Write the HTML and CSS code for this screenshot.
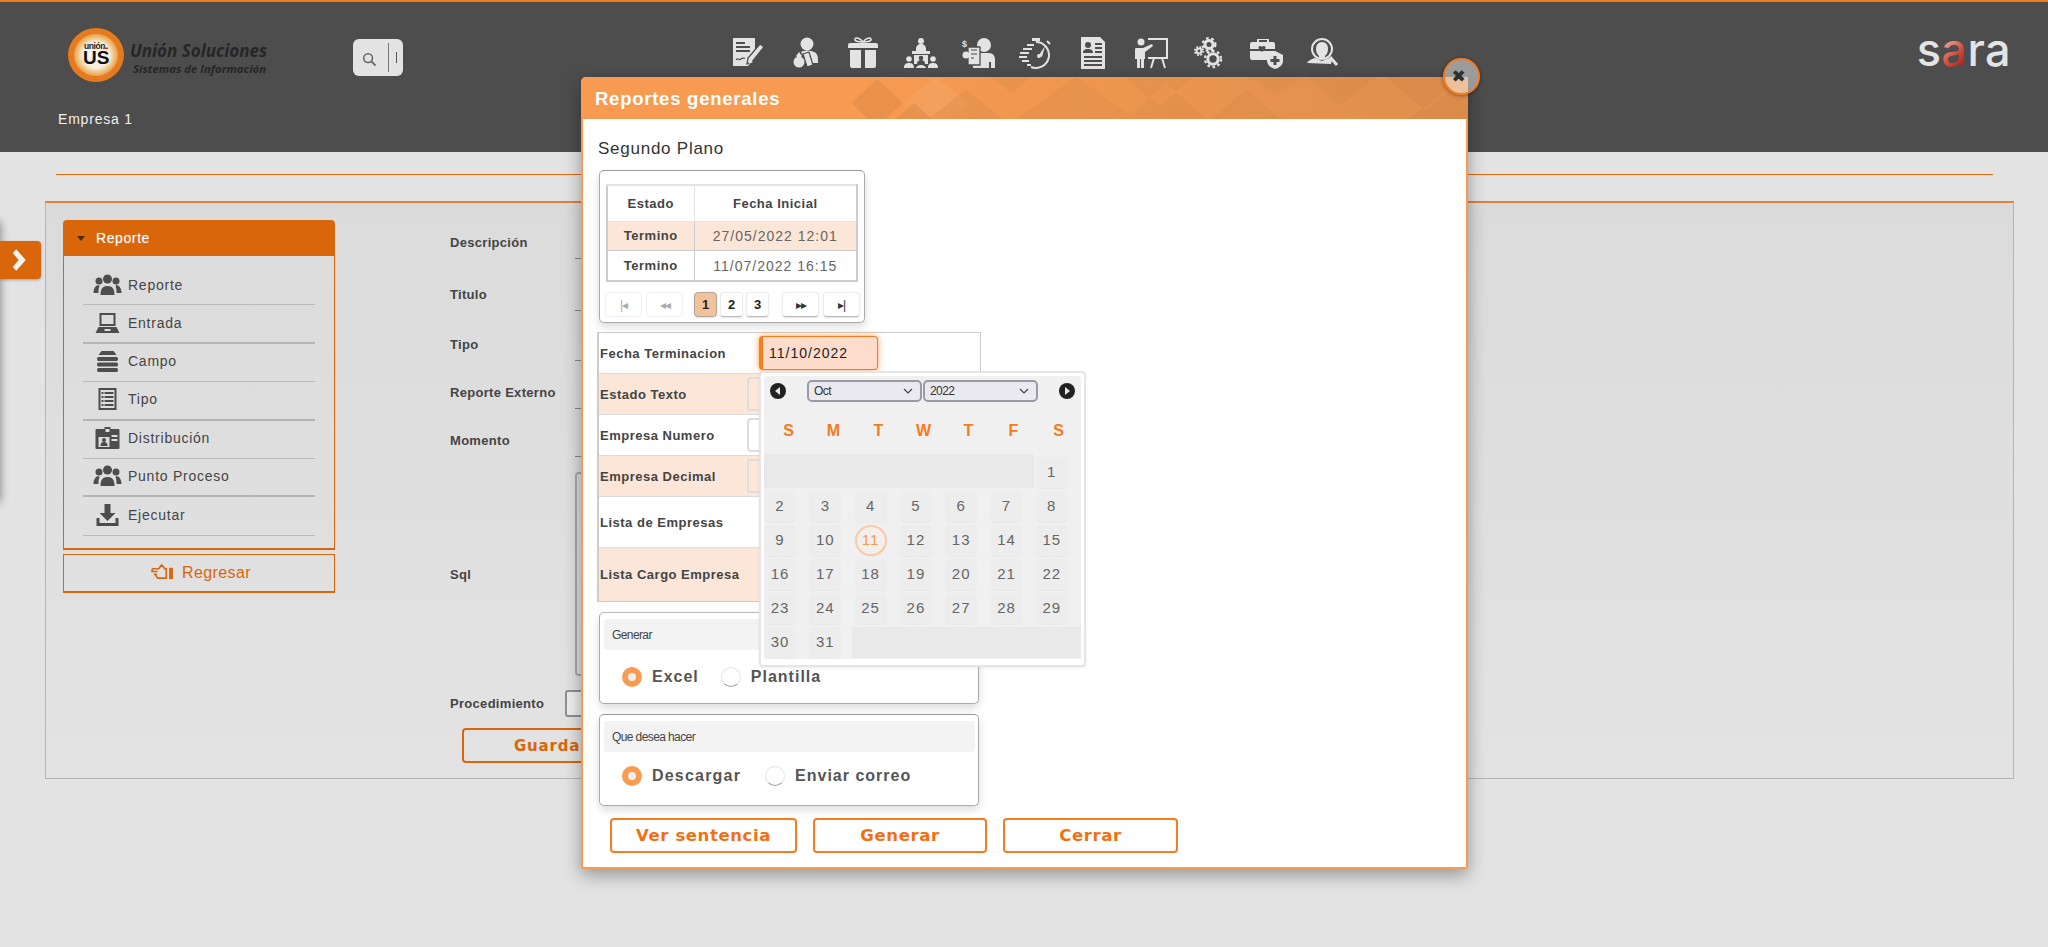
FILE: index.html
```html
<!DOCTYPE html>
<html lang="es">
<head>
<meta charset="utf-8">
<title>Reportes generales</title>
<link rel="stylesheet" href="styles.css">
</head>
<body>
<header class="topbar">
  <div class="topbar-row">
    <div class="brand">
      <svg class="brand-mark" viewBox="0 0 56 54">
        <defs>
          <radialGradient id="lg" cx="50%" cy="50%" r="50%">
            <stop offset="0" stop-color="#fbfaf4"/><stop offset=".62" stop-color="#f6efdc"/><stop offset=".8" stop-color="#eec98c"/><stop offset="1" stop-color="#e9a14e"/>
          </radialGradient>
        </defs>
        <ellipse cx="28" cy="27" rx="28" ry="27" fill="#e67a1f"/>
        <ellipse cx="28" cy="27" rx="22" ry="21" fill="url(#lg)"/>
        <text x="16" y="21" class="mark-small">unión</text>
        <rect x="35" y="19.500" width="5" height="1.500" fill="#c8301f"/>
        <text x="15" y="36" class="mark-big">US</text>
      </svg>
      <div class="brand-text">
        <span class="brand-name">Unión Soluciones</span>
        <span class="brand-sub">Sistemas de Información</span>
      </div>
    </div>
    <div class="search">
      <svg class="search-icon" viewBox="0 0 16 16"><circle cx="6.500" cy="6.500" r="4.700" fill="none" stroke="#666" stroke-width="1.600"/><path d="M10 10l4.500 4.500" stroke="#666" stroke-width="2"/></svg>
      <span class="search-sep"></span>
      <span class="search-caret"></span>
    </div>
    <nav class="nav-icons">
      <svg viewBox="0 0 36 32"><path d="M3 1h22v19l-7 9H3z"/><path d="M6 6h9M6 10h14M6 14h14" class="cut"/><path d="M6 23c2-3 3 1 5-1s3 0 4-1" class="cut thin"/><path d="M17 27l1-6L30 7l4 3-12 15z" class="outl"/><path d="M19 27l4-2-3-2z"/></svg>
      <svg viewBox="0 0 36 32"><circle cx="19" cy="7" r="6.500"/><path d="M13 15c4-2 9-2 13 0 3 1 4 4 4 8v3h-7l-3-10-5 2z"/><path d="M15 17l6-2 4 13-6 2z" class="outl"/><circle cx="11" cy="25" r="5.500"/><path d="M11 15l3 4-3 3-3-3z"/></svg>
      <svg viewBox="0 0 36 32"><path d="M5 6h26a2 2 0 0 1 2 2v3H3V8a2 2 0 0 1 2-2zM5 13h11v18H7a2 2 0 0 1-2-2zM20 13h11v16a2 2 0 0 1-2 2h-9zM20 6v5h-4V6z"/><path d="M18 5c-3-4-7-5-8-3s3 3 8 3c5 0 9-1 8-3s-5-1-8 3z" class="ring"/></svg>
      <svg viewBox="0 0 36 32"><circle cx="18" cy="4" r="3"/><path d="M13 12c0-3 2-5 5-5s5 2 5 5v2H13zM9 14h18v3H9zM11 18h14v9H11z"/><circle cx="18" cy="21" r="2.300" class="dark"/><path d="M14 27c0-3 2-4 4-4s4 1 4 4z" class="dark"/><circle cx="6" cy="22" r="2.800"/><path d="M1 31c0-4 2-5 5-5s5 1 5 5zM13 31c0-1 2-3 5-3s5 2 5 3zM25 31c0-4 2-5 5-5s5 1 5 5z"/><circle cx="30" cy="22" r="2.800"/></svg>
      <svg viewBox="0 0 36 32"><circle cx="24" cy="8" r="7"/><path d="M13 31V22c0-4 3-6 6-6h10c4 0 6 3 6 7v8h-4v-6h-2v6z"/><path d="M8 10h12v18H8z" class="outl"/><path d="M11 13h6M11 17h6M11 21h3" class="cut thin"/><circle cx="6" cy="18" r="3.500"/><text x="2" y="10" class="tiny-d">$</text></svg>
      <svg viewBox="0 0 36 32"><path d="M18 5a13 13 0 1 1-5 25" class="ring w2"/><path d="M14 1h8v3h-8z"/><path d="M29 4l3 3" class="ring w2"/><path d="M21 18l6-9-3 11z" /><circle cx="21" cy="19" r="2"/><path d="M9 8h7M5 12h9M2 16h9M1 20h8M4 24h7M9 28h4" class="ring w2"/></svg>
      <svg viewBox="0 0 36 32"><path d="M6 0h19l5 5v27H6z"/><circle cx="13" cy="8" r="3" class="dark"/><path d="M8 16c0-3 2-4 5-4s5 1 5 4z" class="dark"/><path d="M20 7h7M20 11h7M20 15h7M9 20h18M9 24h18M9 28h18" class="cut"/></svg>
      <svg viewBox="0 0 36 32"><circle cx="8" cy="5" r="3.500"/><path d="M3 11h7l9-4 1 2-8 6v7h-1v9H8v-9H7v9H4v-9H2v-8c0-2 0-3 1-3z"/><path d="M15 2h19v19H15" class="ring w2"/><path d="M21 21l-3 10M29 21l3 10" class="ring w2"/></svg>
      <svg viewBox="0 0 36 32">
        <circle cx="19" cy="7.500" r="4" class="ring w3"/><circle cx="19" cy="7.500" r="6.300" class="teeth"/>
        <circle cx="9" cy="14" r="2.400" class="ring w2"/><circle cx="9" cy="14" r="4.200" class="teeth t-small"/>
        <circle cx="23" cy="22" r="5.200" class="ring w3"/><circle cx="23" cy="22" r="8" class="teeth"/>
      </svg>
      <svg viewBox="0 0 36 32"><path d="M9 5V2h12v3h4a2 2 0 0 1 2 2v5H2V7a2 2 0 0 1 2-2zM11 3v2h8V3zM2 14h25v2c-4 1-6 2-6 3v4H4a2 2 0 0 1-2-2z"/><path d="M11 12c-2-3 2-4 3-2 1-2 5-1 3 2l-3 3z" class="dark"/><path d="M27 14l8 4v6c0 4-4 7-8 8-4-1-8-4-8-8v-6z"/><path d="M25.500 19h3v3h3v3h-3v3h-3v-3h-3v-3h3z" class="dark"/></svg>
      <svg viewBox="0 0 36 32"><circle cx="17" cy="12" r="10" class="ring w2"/><path d="M17 5c4 0 6 3 6 7s-2 6-3 7v2h-6v-2c-1-1-3-3-3-7s2-7 6-7z"/><path d="M2 26c2-3 5-4 8-5l7 3 7-3 3 2-1 4z"/><path d="M25 20l7 8" class="ring w3"/></svg>
    </nav>
    <div class="sara">s<span class="sara-a">a</span>ra</div>
  </div>
  <div class="company">Empresa 1</div>
</header>

<div class="drawer-shadow"></div>
<button class="side-tab"><svg viewBox="0 0 16 22"><path d="M4 2l8 9-8 9-3-3 5-6-5-6z"/></svg></button>

<main class="main">
  <div class="rule"></div>
  <section class="panel">
    <aside class="sidebar">
      <div class="acc-head"><span class="acc-caret"></span>Reporte</div>
      <ul class="acc-body">
        <li class="menu-item"><svg class="menu-icon" viewBox="0 0 28 22"><circle cx="14" cy="5" r="4.500"/><path d="M7 21c0-6 2-9 7-9s7 3 7 9z"/><circle cx="5.500" cy="7" r="3.500"/><circle cx="22.500" cy="7" r="3.500"/><path d="M0 19c0-4 2-8 5-8l1 1c-1 2-1 5-1 7zM28 19c0-4-2-8-5-8l-1 1c1 2 1 5 1 7z"/></svg><span>Reporte</span></li>
        <li class="menu-item thick"><svg class="menu-icon" viewBox="0 0 28 22"><path d="M6 1h16v13H6zM8 3v9h12V3zM5 15h18l3 6H2z"/><path d="M11 17h6v2h-6z" class="cut-f"/></svg><span>Entrada</span></li>
        <li class="menu-item"><svg class="menu-icon" viewBox="0 0 28 22"><path d="M8 1h12l3 4H5zM5 7h18c2 0 2 4 0 4H5c-2 0-2-4 0-4zM5 12.500h18c2 0 2 4 0 4H5c-2 0-2-4 0-4zM5 18h18c2 0 2 4 0 4H5c-2 0-2-4 0-4z"/></svg><span>Campo</span></li>
        <li class="menu-item thick"><svg class="menu-icon" viewBox="0 0 28 22"><path d="M5 0h18v22H5zM7 2v18h14V2z"/><path d="M8 4h2v2H8zM11 4h9v2h-9zM8 8h2v2H8zM11 8h9v2h-9zM8 12h2v2H8zM11 12h9v2h-9zM8 16h2v2H8zM11 16h9v2h-9z"/></svg><span>Tipo</span></li>
        <li class="menu-item"><svg class="menu-icon" viewBox="0 0 28 22"><path d="M11 2V0h6v2h8a1 1 0 0 1 1 1v18a1 1 0 0 1-1 1H3a1 1 0 0 1-1-1V3a1 1 0 0 1 1-1zM12 2v3h4V2z"/><path d="M5 10h11v10H5zM18 8h6v2h-6zM18 12h6v2h-6z" class="cut-f"/><circle cx="10.500" cy="13" r="2"/><path d="M7 19c0-3 1-4 3.500-4s3.500 1 3.500 4z"/></svg><span>Distribución</span></li>
        <li class="menu-item thick"><svg class="menu-icon" viewBox="0 0 28 22"><circle cx="14" cy="5" r="4.500"/><path d="M7 21c0-6 2-9 7-9s7 3 7 9z"/><circle cx="5.500" cy="7" r="3.500"/><circle cx="22.500" cy="7" r="3.500"/><path d="M0 19c0-4 2-8 5-8l1 1c-1 2-1 5-1 7zM28 19c0-4-2-8-5-8l-1 1c1 2 1 5 1 7z"/></svg><span>Punto Proceso</span></li>
        <li class="menu-item"><svg class="menu-icon" viewBox="0 0 28 22"><path d="M11 0h6v9h5l-8 8-8-8h5zM3 14h3v5h16v-5h3v8H3z"/></svg><span>Ejecutar</span></li>
      </ul>
      <button class="back-btn"><svg viewBox="0 0 24 18"><path d="M1 5h7l3-4 3 3v1h2v10h-9l-3-4H6M1 5v3h6M16 5v10" fill="none" stroke="#d9660b" stroke-width="1.700"/><path d="M19 4h4v12h-4z" fill="#d9660b"/></svg>Regresar</button>
    </aside>
    <form class="form">
      <div class="form-row r1"><label>Descripción</label><span class="line-input"></span></div>
      <div class="form-row r2"><label>Titulo</label><span class="line-input"></span></div>
      <div class="form-row r3"><label>Tipo</label><span class="line-input"></span></div>
      <div class="form-row r3"><label>Reporte Externo</label><span class="line-input"></span></div>
      <div class="form-row"><label>Momento</label><span class="line-input"></span></div>
      <div class="form-row sql-row"><label>Sql</label><span class="area-input"></span></div>
      <div class="form-row proc-row"><label>Procedimiento</label><span class="box-input"></span></div>
      <div class="guardar">Guardar</div>
    </form>
  </section>
</main>

<div class="modal">
  <div class="modal-title">
    <svg class="title-pattern" viewBox="0 0 680 42">
      <path d="M51 2l26 24-26 24-26-24z" fill="#de8b47" opacity=".55"/>
      <path d="M110 0l34 26-34 24-34-24z" fill="#fff" opacity=".06"/>
      <path d="M140 12l42 34h-84zM165 0h40l-20 16z" fill="#d88947" opacity=".35"/>
      <path d="M70 42l18-16 18 16z" fill="#d88947" opacity=".5"/>
      <path d="M250 0l60 42H190zM340 6l40 36h-80zM300 0l34 30L366 0z" fill="#d08545" opacity=".22"/>
      <path d="M420 12l34 30h-68zM480 0l36 28 34-28zM420 0h60l-30 16z" fill="#cf8544" opacity=".22"/>
      <path d="M560 0l40 34 40-34zM620 12l36 30h-72z" fill="#cd8343" opacity=".24"/>
    </svg>
    <h1>Reportes generales</h1>
  </div>
  <button class="modal-close">✖</button>
  <div class="modal-body">
    <h2 class="plan-title">Segundo Plano</h2>
    <div class="card plan-card">
      <table class="plan-table">
        <thead><tr><th>Estado</th><th>Fecha Inicial</th></tr></thead>
        <tbody>
          <tr class="alt"><th>Termino</th><td>27/05/2022 12:01</td></tr>
          <tr><th>Termino</th><td>11/07/2022 16:15</td></tr>
        </tbody>
      </table>
      <div class="pager">
        <span class="pg wide off">|◂</span><span class="pg wide off">◂◂</span>
        <span class="pg num cur">1</span><span class="pg num">2</span><span class="pg num">3</span>
        <span class="pg wide next">▸▸</span><span class="pg wide">▸|</span>
      </div>
    </div>
    <div class="filters">
      <div class="f-row"><label>Fecha Terminacion</label><span class="date-input">11/10/2022</span></div>
      <div class="f-row alt"><label>Estado Texto</label><span class="f-input"></span></div>
      <div class="f-row"><label>Empresa Numero</label><span class="f-input"></span></div>
      <div class="f-row alt"><label>Empresa Decimal</label><span class="f-input"></span></div>
      <div class="f-row tall"><label>Lista de Empresas</label></div>
      <div class="f-row alt taller"><label>Lista Cargo Empresa</label></div>
    </div>
    <div class="card opt-card first">
      <div class="opt-head">Generar</div>
      <div class="opt-row"><span class="radio on"></span><span class="opt-label gap-a">Excel</span><span class="radio"></span><span class="opt-label">Plantilla</span></div>
    </div>
    <div class="card opt-card second">
      <div class="opt-head">Que desea hacer</div>
      <div class="opt-row"><span class="radio on"></span><span class="opt-label gap-b">Descargar</span><span class="radio"></span><span class="opt-label">Enviar correo</span></div>
    </div>
    <div class="actions">
      <button class="act a1">Ver sentencia</button>
      <button class="act a2">Generar</button>
      <button class="act a3">Cerrar</button>
    </div>
  </div>
  <div class="calendar">
    <div class="cal-head">
      <span class="cal-nav"><svg viewBox="0 0 16 16"><circle cx="8" cy="8" r="8"/><path d="M10 4v8L5 8z" fill="#e8e8e8"/></svg></span>
      <span class="cal-select s-month">Oct<svg viewBox="0 0 10 6"><path d="M1 1l4 4 4-4" fill="none" stroke="#444" stroke-width="1.200"/></svg></span>
      <span class="cal-select s-year">2022<svg viewBox="0 0 10 6"><path d="M1 1l4 4 4-4" fill="none" stroke="#444" stroke-width="1.200"/></svg></span>
      <span class="cal-nav"><svg viewBox="0 0 16 16"><circle cx="8" cy="8" r="8"/><path d="M6 4v8l5-4z" fill="#e8e8e8"/></svg></span>
    </div>
    <div class="cal-week"><span>S</span><span>M</span><span>T</span><span>W</span><span>T</span><span>F</span><span>S</span></div>
    <div class="cal-grid">
      <span class="blank b6"></span><span class="day">1</span>
      <span class="day">2</span><span class="day">3</span><span class="day">4</span><span class="day">5</span><span class="day">6</span><span class="day">7</span><span class="day">8</span>
      <span class="day">9</span><span class="day">10</span><span class="day today">11</span><span class="day">12</span><span class="day">13</span><span class="day">14</span><span class="day">15</span>
      <span class="day">16</span><span class="day">17</span><span class="day">18</span><span class="day">19</span><span class="day">20</span><span class="day">21</span><span class="day">22</span>
      <span class="day">23</span><span class="day">24</span><span class="day">25</span><span class="day">26</span><span class="day">27</span><span class="day">28</span><span class="day">29</span>
      <span class="day">30</span><span class="day">31</span><span class="blank b5"></span>
    </div>
  </div>
</div>
</body>
</html>
```
FILE: styles.css
```css
* { box-sizing: border-box; }
html, body { margin: 0; height: 947px; overflow: hidden; }
body { background: #e3e3e3; font-family: "Liberation Sans", Arial, sans-serif; color: #444; position: relative; }

/* top bar */
.topbar { height: 152px; background: #4d4d4d; border-top: 2px solid #f07a1e; }
.topbar-row { display: flex; align-items: flex-start; padding: 26px 37px 0 68px; height: 100px; }
.brand { display: flex; width: 285px; gap: 6px; }
.brand-mark { width: 56px; height: 54px; flex: none; }
.mark-small { font: bold 8.500px "Liberation Sans", sans-serif; fill: #222; letter-spacing: -.4px; }
.mark-big { font: bold 19px "Liberation Sans", sans-serif; fill: #111; }
.brand-text { display: flex; flex-direction: column; padding-top: 13px; color: #262626; font-family: "Open Sans", sans-serif; font-style: italic; font-weight: 700; white-space: nowrap; }
.brand-name { font-size: 17px; line-height: 20px; }
.brand-sub { font-size: 11.400px; line-height: 15px; padding-left: 3px; }
.search { width: 50px; height: 37px; margin-top: 11px; background: #e3e3e3; border-radius: 6px; display: flex; align-items: center; padding-left: 9px; }
.search-icon { width: 15px; height: 15px; margin-top: 3px; }
.search-sep { width: 1px; height: 29px; background: #777; margin-left: 11px; }
.search-caret { width: 1px; height: 11px; background: #555; margin-left: 7px; }
.nav-icons { display: flex; gap: 21.500px; margin-left: 327px; margin-top: 9px; }
.nav-icons svg { width: 36px; height: 32px; fill: #e3e3e3; flex: none; }
.nav-icons .cut { stroke: #4d4d4d; stroke-width: 2; fill: none; }
.nav-icons .cut.thin { stroke-width: 1.200; }
.nav-icons .outl { stroke: #4d4d4d; stroke-width: 1.300; fill: #e3e3e3; }
.nav-icons .ring { fill: none; stroke: #e3e3e3; stroke-width: 1.500; }
.nav-icons .ring.w2 { stroke-width: 2; }
.nav-icons .ring.w3 { stroke-width: 3; }
.nav-icons .dark { fill: #4d4d4d; }
.nav-icons .tiny-d { font: bold 9px "Liberation Sans", sans-serif; fill: #e3e3e3; }
.nav-icons .teeth { fill: none; stroke: #e3e3e3; stroke-width: 2.400; stroke-dasharray: 2.600 2.600; }
.nav-icons .teeth.t-small { stroke-width: 1.800; stroke-dasharray: 1.800 1.500; }
.sara { margin-left: auto; font-family: Inter, sans-serif; font-size: 45px; font-weight: 500; line-height: 32px; height: 32px; color: #e4e4e4; margin-top: 6px; letter-spacing: .4px; }
.sara-a { background: linear-gradient(135deg, #e9b0a5 25%, #d0483a 60%, #a81c1c 85%); -webkit-background-clip: text; background-clip: text; color: transparent; }
.company { color: #f0f0f0; font-size: 14px; letter-spacing: .8px; padding-left: 58px; line-height: 18px; margin-top: 8px; }

/* left drawer */
.drawer-shadow { position: absolute; left: -12px; top: 222px; width: 12px; height: 280px; box-shadow: 0 0 10px rgba(0,0,0,.45); }
.side-tab { position: absolute; left: 0; top: 241px; width: 41px; height: 38px; border: 0; padding: 0; background: #d9660b; border-radius: 0 4px 4px 0; box-shadow: 0 1px 3px rgba(0,0,0,.3); display: flex; align-items: center; justify-content: center; }
.side-tab svg { width: 20px; height: 26px; fill: #f2f2f2; }

/* main */
.main { padding-top: 22px; }
.rule { height: 1px; background: #e06a10; margin: 0 55px 0 56px; }
.panel { display: flex; margin: 26px 34px 0 45px; height: 578px; border: 1px solid #b5b5b5; border-top: 2px solid #de8240; background: linear-gradient(#dbdbdb, #e3e3e3); padding: 17px 0 0 17px; }

.sidebar { width: 272px; flex: none; }
.acc-head { height: 36px; background: #d9660b; border-radius: 4px 4px 0 0; color: #fff; font-size: 14px; letter-spacing: .6px; display: flex; align-items: center; padding-left: 14px; text-shadow: 0 0 2px rgba(255,255,255,.25); }
.acc-caret { width: 0; height: 0; border: 4.500px solid transparent; border-top: 5px solid #4a2a10; border-bottom: 0; margin-right: 11px; }
.acc-body { list-style: none; margin: 0; padding: 11px 19px 0; height: 294px; border: 1px solid #d9660b; border-top: 0; border-bottom-width: 2px; }
.menu-item { height: 38.400px; display: flex; align-items: center; gap: 6px; border-bottom: 1px solid #bbb; font-size: 14px; letter-spacing: .75px; color: #444; padding-bottom: 2px; }
.menu-item.thick { border-bottom-width: 2px; border-color: #b5b5b5; }
.menu-icon { width: 29px; height: 22px; fill: #4d4d4d; flex: none; margin-left: 10px; }
.menu-icon .cut-f { fill: #dcdcdc; }
.back-btn { width: 272px; height: 39px; margin-top: 4px; background: transparent; border: 1px solid #d9660b; border-bottom-width: 2px; color: #d9660b; font: 16px "Liberation Sans", sans-serif; letter-spacing: .4px; display: flex; align-items: center; justify-content: center; gap: 8px; padding: 0 0 1px 4px; }
.back-btn svg { width: 23px; height: 17px; }

.form { margin-left: 115px; width: 800px; padding-top: 2px; }
.form-row { display: flex; align-items: center; height: 40px; margin-bottom: 8px; }
.form-row.r1 { margin-bottom: 12px; }
.form-row.r2 { margin-bottom: 10px; }
.form-row label { width: 125px; font-size: 13px; font-weight: 700; letter-spacing: .3px; color: #444; flex: none; white-space: nowrap; }
.line-input { width: 700px; height: 34px; border-bottom: 1px solid #888; }
.sql-row { height: 204px; margin: 12px 0 14px; }
.area-input { width: 700px; height: 204px; border: 2px solid #a8a8ae; border-radius: 4px; }
.proc-row { height: 27px; margin-bottom: 11px; }
.proc-row label { width: 115px; }
.box-input { width: 700px; height: 27px; border: 2px solid #8f8f9a; border-radius: 3px; background: #eee; }
.guardar { width: 220px; height: 35px; margin-left: 12px; border: 2px solid #d9660b; border-radius: 4px; font-family: "DejaVu Sans", sans-serif; font-weight: 700; font-size: 15px; letter-spacing: .8px; color: #d9660b; display: flex; align-items: center; padding-left: 50px; }

/* modal */
.modal { position: absolute; left: 581px; top: 77px; width: 887px; height: 792px; background: #fff; border: 2px solid #f79b52; border-top: 0; border-radius: 5px 0 3px 3px; box-shadow: 0 6px 18px rgba(0,0,0,.35); }
.modal-title { position: relative; height: 42px; margin: 0 -2px; background: linear-gradient(90deg, #f89b52 30%, #de8e4c 100%); border-radius: 5px 0 0 0; overflow: hidden; display: flex; align-items: center; padding: 2px 0 0 14px; }
.title-pattern { position: absolute; left: 245px; top: 0; width: 680px; height: 42px; }
.modal-title h1 { margin: 0; position: relative; font-size: 18.500px; font-weight: 700; color: #fff; letter-spacing: .75px; }
.modal-close { position: absolute; left: 860px; top: -19px; width: 37px; height: 37px; padding: 0 6px 2px 0; border-radius: 50%; border: 2px solid #f57c1f; background: rgba(255,255,255,.45); box-shadow: 0 1px 4px rgba(0,0,0,.4); color: #2d2d2d; font: 17px "DejaVu Sans", sans-serif; display: flex; align-items: center; justify-content: center; }
.modal-body { padding: 20px 0 0 15px; }
.plan-title { margin: 0; font-size: 17px; font-weight: 400; line-height: 20px; color: #333; letter-spacing: .75px; }
.card { width: 266px; height: 153px; margin: 11px 0 0 1px; background: #fff; border: 1px solid #aaa; border-top-color: #999; border-radius: 5px; box-shadow: 0 4px 8px rgba(0,0,0,.14); padding: 13px 0 0 6px; }
.plan-table { width: 252px; height: 98px; border-collapse: collapse; border: 2px solid #ccc; border-top-color: #e3e3e3; border-left-color: #ccc; table-layout: fixed; font-size: 13px; }
.plan-table th, .plan-table td { border: 1px solid #ccc; text-align: center; padding: 0; }
.plan-table th { font-weight: 700; letter-spacing: .5px; color: #444; }
.plan-table th:first-child { width: 87px; }
.plan-table thead tr { height: 36px; }
.plan-table thead th { border-color: #e3e3e3; }
.plan-table td { font-size: 14px; letter-spacing: 1px; color: #666; }
.plan-table .alt { background: #fbe6d7; }
.pager { display: flex; margin: 10px 0 0 -1px; }
.pg { height: 25px; border-radius: 4px; background: #fff; border: 1px solid #ececec; border-bottom-color: #bbb; box-shadow: 0 1px 2px rgba(0,0,0,.12); font-size: 12px; color: #333; display: flex; align-items: center; justify-content: center; flex: none; }
.pg.wide { width: 37px; margin-right: 4px; letter-spacing: -1px; }
.pg.off { color: #aaa; border-color: #efefef; box-shadow: none; }
.pg.num { width: 23px; margin-right: 3px; font-size: 13px; font-weight: 700; color: #222; }
.pg.cur { background: #f2c39b; border-color: #b0a498; color: #222; margin-left: 7px; }
.pg.next { margin-left: 10px; }

.filters { width: 384px; margin-top: 9px; margin-left: -1px; border: 1px solid #ccc; border-left-width: 2px; }
.f-row { height: 41px; display: flex; align-items: center; border-bottom: 1px solid #ddd; padding-left: 1px; font-size: 13px; font-weight: 700; letter-spacing: .5px; color: #444; }
.f-row:last-child { border-bottom: 0; }
.f-row.alt { background: #fbe6d7; }
.f-row label { width: 147px; flex: none; white-space: nowrap; }
.f-row.tall { height: 51px; }
.f-row.taller { height: 53px; }
.f-input { width: 130px; height: 34px; border: 2px solid #ddd; border-radius: 4px; background: #fff; }
.f-row.alt .f-input { background: #fbe6d7; }
.date-input { width: 119px; height: 34px; margin-left: 12px; border: 1px solid #f57c1f; border-left-width: 4px; border-radius: 4px; background: #fddccb; box-shadow: 0 0 6px rgba(245,124,31,.75); color: #222; font-size: 14px; font-weight: 400; letter-spacing: 1px; display: flex; align-items: center; padding-left: 6px; }

.opt-card { width: 380px; height: 91px; margin: 11px 0 0 1px; padding: 6px 3px 0 4px; border-top-color: #bbb; }
.opt-card.first { height: 92px; margin-top: 10px; }
.opt-card.first .opt-row { padding-top: 4px; height: 50px; }
.opt-card.second { height: 92px; margin-top: 10px; border-top-color: #999; }
.opt-head { height: 31px; background: #f3f3f3; border-radius: 4px; font-size: 12px; letter-spacing: -.6px; color: #444; display: flex; align-items: center; padding-left: 8px; }
.opt-row { display: flex; align-items: center; padding-left: 18px; height: 48px; }
.radio { width: 20px; height: 20px; border-radius: 50%; border: 1px solid #e5e5e5; border-bottom-color: #999; background: #fff; flex: none; margin-right: 10px; }
.radio.on { border: 6px solid #f79b52; background: #eee; }
.opt-label { font-size: 16px; font-weight: 700; letter-spacing: 1px; color: #555; }
.gap-a { margin-right: 22px; }
.gap-b { margin-right: 24px; letter-spacing: 1.200px; }

.actions { display: flex; margin: 12px 0 0 12px; }
.act { height: 35px; background: #fff; border: 2px solid #f57c1f; border-radius: 4px; font-family: "DejaVu Sans", sans-serif; font-weight: 700; font-size: 16.500px; letter-spacing: .6px; color: #f46f0d; padding: 0; flex: none; }
.a1 { width: 187px; }
.a2 { width: 174px; margin-left: 16px; }
.a3 { width: 175px; margin-left: 16px; }

/* date picker */
.calendar { position: absolute; left: 176px; top: 294px; width: 327px; height: 296px; background: #fff; border: 2px solid #e5e5e5; border-radius: 4px; padding: 3px; box-shadow: 0 1px 3px rgba(0,0,0,.08); }
.cal-head { height: 29px; background: #f0f0f0; border-radius: 4px 4px 0 0; display: flex; align-items: center; padding: 0 5px 0 6px; }
.cal-nav { width: 16px; height: 16px; flex: none; display: block; }
.cal-nav svg { width: 16px; height: 16px; fill: #222; display: block; }
.cal-select { height: 22px; width: 115px; background: #e9e9ef; border: 2px solid #9a9aa6; border-radius: 5px; font-size: 12px; letter-spacing: -.6px; color: #333; display: flex; align-items: center; justify-content: space-between; padding: 0 7px 0 5px; }
.cal-select svg { width: 10px; height: 6px; }
.s-month { margin-left: 21px; }
.s-year { margin: 0 21px 0 1px; }
.cal-week { height: 49px; background: #f0f0f0; display: grid; grid-template-columns: repeat(7, 1fr); align-items: center; text-align: center; font-size: 16px; font-weight: 700; color: #f47b20; padding: 2px 0 0 2px; }
.cal-grid { height: 205px; background: #f0f0f0; display: grid; grid-template-columns: repeat(7, 32px); grid-auto-rows: 31px; column-gap: 13.300px; row-gap: 3px; padding-top: 3px; position: relative; }
.day { background: #ededed; border-radius: 5px; font-size: 15px; letter-spacing: 1px; color: #666; display: flex; align-items: center; justify-content: center; padding-bottom: 2px; box-shadow: 0 1px 1px rgba(0,0,0,.03); }
.day.today { background: #f4efeb; color: #f79b52; border: 2px solid #f8cba8; border-radius: 50%; }
.blank { background: #e9e9e9; margin-top: -3px; height: 34px; }
.b6 { grid-column: span 6; margin-right: -11.500px; }
.b5 { grid-column: span 5; margin: 0 -13.300px 0 -3px; height: 31px; }
```
